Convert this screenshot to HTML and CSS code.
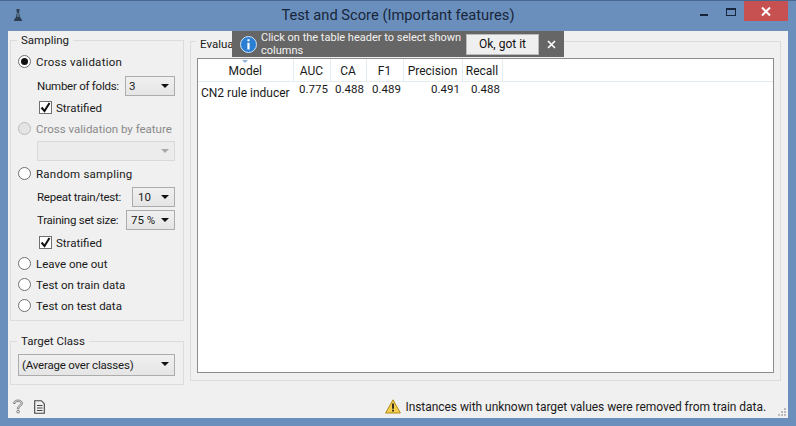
FILE: index.html
```html
<!DOCTYPE html>
<html lang="en">
<head>
    <meta charset="UTF-8">
    <meta name="viewport" content="width=device-width, initial-scale=1.0">
    <title>Test and Score (Important features)</title>
    <link rel="stylesheet" href="styles.css">
</head>
<body>
    <div class="titlebar">
        <svg class="app-icon" width="10" height="14" viewBox="0 0 10 14">
            <path d="M3.5 1h3v2l-.5 1 1 5 2 3v1H1v-1l2-3 1-5-.5-1z" fill="#2c3e50"/>
            <path d="M4.5 5h1v4h-1z" fill="#7f9fc0"/>
        </svg>
        <div class="title">Test and Score (Important features)</div>
        <div class="win-buttons">
            <span class="btn-min"></span>
            <span class="btn-max"></span>
            <span class="btn-close">
                <svg width="10" height="9" viewBox="0 0 10 9"><path d="M1 .5l8 8M9 .5l-8 8" stroke="#fff" stroke-width="2" fill="none"/></svg>
            </span>
        </div>
    </div>

    <div class="client">
        <div class="content">
            <div class="sidebar">
                <fieldset class="box sampling">
                    <legend>Sampling</legend>
                    <div class="row loose"><span class="radio on"></span>Cross validation</div>
                    <div class="row sub spaced2"><span class="lbl">Number of folds:</span><span class="combo w50">3<i class="arrow"></i></span></div>
                    <div class="row sub2"><span class="check"><svg width="11" height="11" viewBox="0 0 11 11"><path d="M1.5 5.5l3 3.5 5-8" stroke="#111" stroke-width="2" fill="none"/></svg></span>Stratified</div>
                    <div class="row off"><span class="radio"></span>Cross validation by feature</div>
                    <div class="row sub"><span class="combo disabled"><i class="arrow"></i></span></div>
                    <div class="row spaced1 loose"><span class="radio"></span>Random sampling</div>
                    <div class="row sub spaced1"><span class="lbl">Repeat train/test:</span><span class="combo w43">10<i class="arrow"></i></span></div>
                    <div class="row sub"><span class="lbl">Training set size:</span><span class="combo w49">75 %<i class="arrow"></i></span></div>
                    <div class="row sub2 spaced1"><span class="check"><svg width="11" height="11" viewBox="0 0 11 11"><path d="M1.5 5.5l3 3.5 5-8" stroke="#111" stroke-width="2" fill="none"/></svg></span>Stratified</div>
                    <div class="row"><span class="radio"></span>Leave one out</div>
                    <div class="row"><span class="radio"></span>Test on train data</div>
                    <div class="row"><span class="radio"></span>Test on test data</div>
                </fieldset>
                <fieldset class="box target">
                    <legend>Target Class</legend>
                    <span class="combo wide">(Average over classes)<i class="arrow"></i></span>
                </fieldset>
            </div>

            <fieldset class="box evaluation">
                <legend>Evaluation Results</legend>
                <div class="table-wrap">
                    <i class="sort-mark"></i>
                    <table class="results">
                        <thead>
                            <tr>
                                <th class="c-model">Model</th>
                                <th class="c-auc">AUC</th>
                                <th class="c-ca">CA</th>
                                <th class="c-f1">F1</th>
                                <th class="c-prec">Precision</th>
                                <th class="c-rec">Recall</th>
                                <th class="c-rest"></th>
                            </tr>
                        </thead>
                        <tbody>
                            <tr>
                                <td class="name">CN2 rule inducer</td>
                                <td>0.775</td>
                                <td>0.488</td>
                                <td>0.489</td>
                                <td>0.491</td>
                                <td>0.488</td>
                                <td></td>
                            </tr>
                        </tbody>
                    </table>
                </div>
            </fieldset>
        </div>

        <div class="statusbar">
            <svg class="status-icon" width="12" height="15" viewBox="0 0 12 15">
                <path d="M1.500 4.500C1.500 2.300 3.300 1 6 1s4.500 1.400 4.500 3.300c0 3-3.600 2.700-3.600 5.500H5.300c0-3.600 3.500-3.200 3.500-5.500C8.800 3.200 7.700 2.500 6 2.500S3.200 3.300 3.200 4.500z" stroke="#666" stroke-width=".7" fill="#ddd"/>
                <circle cx="6.100" cy="12.600" r="1.400" fill="#ddd" stroke="#666" stroke-width=".7"/>
            </svg>
            <svg class="status-icon doc" width="11" height="14" viewBox="0 0 11 14">
                <path d="M.7.7h6.600l3 3v9.600H.7zM3 5.500h5.500M3 8h5.500M3 10.500h5.500" stroke="#444" stroke-width="1.100" fill="none"/>
            </svg>
            <div class="warning">
                <svg width="16" height="15" viewBox="0 0 16 15">
                    <path d="M8 .8L15.400 14H.6z" fill="#f5cf4a" stroke="#b08a1c" stroke-width="1"/>
                    <path d="M7.100 4.500h1.800v5.200H7.100zM7.100 10.800h1.800v1.800H7.100z" fill="#222"/>
                </svg>
                <span>Instances with unknown target values were removed from train data.</span>
            </div>
            <svg class="grip" width="8" height="8" viewBox="0 0 8 8">
                <path d="M6 0h2v2H6zM3 3h2v2H3zM6 3h2v2H6zM0 6h2v2H0zM3 6h2v2H3zM6 6h2v2H6z" fill="#bbb"/>
            </svg>
        </div>
    </div>

    <div class="tip">
        <svg width="17" height="17" viewBox="0 0 17 17">
            <circle cx="8.500" cy="8.500" r="8" fill="#2a7fd5" stroke="#cfe3f7" stroke-width="1"/>
            <path d="M7.400 3.200h2.200v2.100H7.400zM7.400 6.800h2.200v6.600H7.400z" fill="#fff"/>
        </svg>
        <p>Click on the table header to select shown columns</p>
        <button class="tip-ok">Ok, got it</button>
        <svg class="tip-close" width="9" height="9" viewBox="0 0 9 9"><path d="M1 1l7 7M8 1l-7 7" stroke="#fff" stroke-width="1.600" fill="none"/></svg>
    </div>
</body>
</html>
```
FILE: styles.css
```css
* {
    box-sizing: border-box;
}
html, body {
    margin: 0;
    height: 100%;
    overflow: hidden;
}
body {
    position: relative;
    width: 796px;
    height: 426px;
    background-color: #6b8fbd;
    border-top: 1px solid #49688f;
    font-family: Roboto, "Noto Sans", sans-serif;
    font-size: 12px;
    color: #1a1a1a;
}
.titlebar {
    display: flex;
    align-items: center;
    height: 30px;
    padding-left: 13px;
    position: relative;
}
.app-icon {
    margin-top: -3px;
}
.title {
    position: absolute;
    left: 0;
    right: 0;
    top: 4px;
    text-align: center;
    font-size: 14.7px;
    line-height: 20px;
    color: #17263a;
}
.win-buttons {
    margin-left: auto;
    margin-right: 8px;
    display: flex;
    align-self: flex-start;
    position: relative;
}
.btn-min {
    width: 8px;
    height: 2px;
    background: #17263a;
    margin-top: 13px;
    margin-right: 18px;
}
.btn-max {
    width: 10px;
    height: 8px;
    border: 1px solid #17263a;
    border-top-width: 2px;
    margin-top: 7px;
    margin-right: 8px;
}
.btn-close {
    width: 44px;
    height: 20px;
    background: #c75050;
    display: flex;
    align-items: center;
    justify-content: center;
}
.client {
    margin: 0 8px;
    width: 780px;
    height: 387px;
    background: #f0f0f0;
    display: flex;
    flex-direction: column;
}
.content {
    display: flex;
    gap: 6px;
    padding: 0 7px 0 2px;
    height: 364px;
}
.box {
    margin: 0;
    border: 1px solid #dcdcdc;
    padding: 0;
    min-width: 0;
}
.box legend {
    margin-left: -1px;
    padding: 0 4px;
    line-height: 16px;
    font-size: 11.5px;
}
.sidebar {
    width: 174px;
    display: flex;
    flex-direction: column;
    margin-top: 1px;
    font-size: 11.5px;
}
.sampling {
    height: 289px;
    padding: 3px 8px 0 7px;
}
.row {
    display: flex;
    align-items: center;
    height: 21px;
    white-space: nowrap;
}
.row.loose {
    letter-spacing: .25px;
}
.row.sub {
    height: 23px;
    padding-left: 19px;
    justify-content: space-between;
}
.row.sub .combo {
    margin-left: auto;
    flex: none;
}
.row.sub2 {
    height: 21px;
    padding-left: 21px;
}
.row.spaced1 {
    margin-top: 1px;
}
.row.spaced2 {
    margin-top: 2px;
}
.row.off {
    color: #8a8a8a;
}
.row.off .radio {
    background: #e4e4e4;
    border-color: #bcbcbc;
}
.lbl {
    white-space: nowrap;
    letter-spacing: -.25px;
}
.radio {
    width: 13px;
    height: 13px;
    border: 1px solid #707070;
    border-radius: 50%;
    background: #fff;
    margin-right: 5px;
    position: relative;
    flex: none;
}
.radio.on::after {
    content: "";
    position: absolute;
    left: 2px;
    top: 2px;
    width: 7px;
    height: 7px;
    border-radius: 50%;
    background: #111;
}
.check {
    width: 13px;
    height: 13px;
    border: 1px solid #707070;
    background: #fff;
    margin-right: 4px;
    display: flex;
    flex: none;
}
.combo {
    position: relative;
    display: flex;
    align-items: center;
    height: 20px;
    padding-left: 3px;
    border: 1px solid #acacac;
    background: linear-gradient(#f0f0f0, #e5e5e5);
    white-space: nowrap;
}
.combo.w50 { width: 50px; }
.combo.w43 { width: 43px; padding-left: 5px; }
.combo.w49 { width: 49px; padding-left: 4px; }
.combo.disabled {
    width: 138px;
    background: #ececec;
    border-color: #d9d9d9;
}
.combo.disabled .arrow {
    border-top-color: #a8a8a8;
}
.combo.wide {
    width: 157px;
    height: 22px;
    letter-spacing: -.2px;
}
.arrow {
    position: absolute;
    right: 5px;
    top: 7px;
    width: 0;
    height: 0;
    border-left: 4px solid transparent;
    border-right: 4px solid transparent;
    border-top: 4px solid #111;
}
.target {
    margin-top: 12px;
    height: 52px;
    padding: 5px 8px 0 7px;
}
.evaluation {
    width: 592px;
    height: 351px;
    padding: 6px 6px 0 6px;
    margin-top: -1px;
}
.evaluation legend {
    padding-top: 6px;
}
.table-wrap {
    position: relative;
    width: 577px;
    height: 315px;
    background: #fff;
    border: 1px solid #8c8c8c;
}
.sort-mark {
    position: absolute;
    left: 44px;
    top: 1px;
    width: 0;
    height: 0;
    border-left: 3px solid transparent;
    border-right: 3px solid transparent;
    border-top: 3px solid #8db4dc;
}
.results {
    border-collapse: collapse;
    table-layout: fixed;
    width: 575px;
}
.results th {
    font-weight: normal;
    height: 22px;
    padding: 2px 0 0;
    border-right: 1px solid #e3ebf3;
    border-bottom: 1px solid #e3ebf3;
}
.results th.c-rest {
    border-right: none;
}
.c-model { width: 95px; }
.c-auc { width: 37px; }
.c-ca { width: 36px; }
.c-f1 { width: 37px; }
.c-prec { width: 59px; }
.c-rec { width: 40px; }
.results td {
    text-align: right;
    vertical-align: top;
    padding: 0 2px 0 0;
    line-height: 15px;
    font-size: 11.5px;
}
.results td.name {
    text-align: left;
    padding: 3px 0 0 3px;
    line-height: 16px;
    font-size: 12px;
    white-space: nowrap;
}
.statusbar {
    flex: 1;
    display: flex;
    align-items: center;
    padding-left: 4px;
    position: relative;
}
.status-icon.doc {
    margin-left: 10px;
}
.warning {
    margin-left: auto;
    margin-right: 22px;
    display: flex;
    align-items: center;
    gap: 4px;
    letter-spacing: -.05px;
}
.grip {
    position: absolute;
    right: 2px;
    bottom: 2px;
}
.tip {
    position: absolute;
    left: 232px;
    top: 30px;
    width: 332px;
    height: 26px;
    background: #666;
    color: #f2f2f2;
    display: flex;
    align-items: center;
    padding-left: 8px;
}
.tip p {
    margin: 0 0 0 4px;
    width: 202px;
    line-height: 13px;
    font-size: 11px;
}
.tip-ok {
    margin-left: 3px;
    width: 73px;
    height: 21px;
    padding: 0;
    border: 1px solid #bbb;
    background: #efefef;
    font: inherit;
    color: #111;
}
.tip-close {
    margin-left: 8px;
}
```
